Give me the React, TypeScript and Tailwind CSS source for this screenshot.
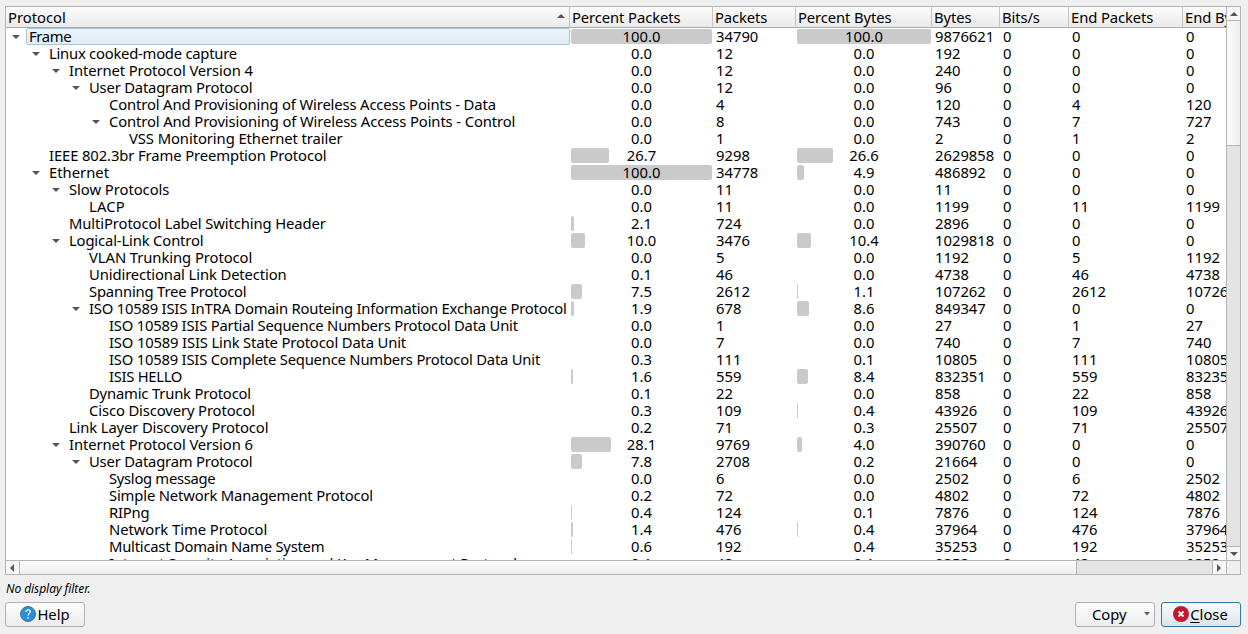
type Row = {
  depth: number;
  name: string;
  open: boolean;
  pp: string;
  packets: string;
  pb: string;
  bytes: string;
  endPackets: string;
  endBytes: string;
  spacing: number;
  ppBar: number;
  pbBar: number;
};

const r = (
  depth: number,
  open: boolean,
  name: string,
  spacing: number,
  pp: string,
  packets: string,
  pb: string,
  bytes: string,
  endPackets: string,
  endBytes: string,
  ppBar = 0,
  pbBar = 0,
): Row => ({ depth, open, name, spacing, pp, packets, pb, bytes, endPackets, endBytes, ppBar, pbBar });

const rows: Row[] = [
  r(0, true, 'Frame', -0.35, '100.0', '34790', '100.0', '9876621', '0', '0', 141, 134),
  r(1, true, 'Linux cooked-mode capture', -0.24, '0.0', '12', '0.0', '192', '0', '0'),
  r(2, true, 'Internet Protocol Version 4', -0.11, '0.0', '12', '0.0', '240', '0', '0'),
  r(3, true, 'User Datagram Protocol', -0.2, '0.0', '12', '0.0', '96', '0', '0'),
  r(4, false, 'Control And Provisioning of Wireless Access Points - Data', -0.14, '0.0', '4', '0.0', '120', '4', '120'),
  r(4, true, 'Control And Provisioning of Wireless Access Points - Control', -0.12, '0.0', '8', '0.0', '743', '7', '727'),
  r(5, false, 'VSS Monitoring Ethernet trailer', -0.08, '0.0', '1', '0.0', '2', '1', '2'),
  r(1, false, 'IEEE 802.3br Frame Preemption Protocol', -0.11, '26.7', '9298', '26.6', '2629858', '0', '0', 38, 36),
  r(1, true, 'Ethernet', 0, '100.0', '34778', '4.9', '486892', '0', '0', 141, 7),
  r(2, true, 'Slow Protocols', -0.05, '0.0', '11', '0.0', '11', '0', '0'),
  r(3, false, 'LACP', 0.2, '0.0', '11', '0.0', '1199', '11', '1199'),
  r(2, false, 'MultiProtocol Label Switching Header', -0.11, '2.1', '724', '0.0', '2896', '0', '0', 3),
  r(2, true, 'Logical-Link Control', -0.15, '10.0', '3476', '10.4', '1029818', '0', '0', 14, 14),
  r(3, false, 'VLAN Trunking Protocol', -0.07, '0.0', '5', '0.0', '1192', '5', '1192'),
  r(3, false, 'Unidirectional Link Detection', -0.11, '0.1', '46', '0.0', '4738', '46', '4738'),
  r(3, false, 'Spanning Tree Protocol', -0.18, '7.5', '2612', '1.1', '107262', '2612', '107262', 11, 1),
  r(3, true, 'ISO 10589 ISIS InTRA Domain Routeing Information Exchange Protocol', -0.21, '1.9', '678', '8.6', '849347', '0', '0', 3, 12),
  r(4, false, 'ISO 10589 ISIS Partial Sequence Numbers Protocol Data Unit', -0.21, '0.0', '1', '0.0', '27', '1', '27'),
  r(4, false, 'ISO 10589 ISIS Link State Protocol Data Unit', -0.16, '0.0', '7', '0.0', '740', '7', '740'),
  r(4, false, 'ISO 10589 ISIS Complete Sequence Numbers Protocol Data Unit', -0.21, '0.3', '111', '0.1', '10805', '111', '10805'),
  r(4, false, 'ISIS HELLO', -0.3, '1.6', '559', '8.4', '832351', '559', '832351', 2, 11),
  r(3, false, 'Dynamic Trunk Protocol', -0.18, '0.1', '22', '0.0', '858', '22', '858'),
  r(3, false, 'Cisco Discovery Protocol', -0.12, '0.3', '109', '0.4', '43926', '109', '43926', 0, 1),
  r(2, false, 'Link Layer Discovery Protocol', -0.13, '0.2', '71', '0.3', '25507', '71', '25507'),
  r(2, true, 'Internet Protocol Version 6', -0.11, '28.1', '9769', '4.0', '390760', '0', '0', 40, 5),
  r(3, true, 'User Datagram Protocol', -0.2, '7.8', '2708', '0.2', '21664', '0', '0', 11),
  r(4, false, 'Syslog message', -0.3, '0.0', '6', '0.0', '2502', '6', '2502'),
  r(4, false, 'Simple Network Management Protocol', -0.16, '0.2', '72', '0.0', '4802', '72', '4802'),
  r(4, false, 'RIPng', -0.2, '0.4', '124', '0.1', '7876', '124', '7876', 1),
  r(4, false, 'Network Time Protocol', -0.05, '1.4', '476', '0.4', '37964', '476', '37964', 2, 1),
  r(4, false, 'Multicast Domain Name System', -0.23, '0.6', '192', '0.4', '35253', '192', '35253', 1),
  r(4, false, 'Internet Security Association and Key Management Protocol', -0.16, '0.1', '42', '0.1', '9252', '42', '9252'),
];

const grid = 'grid grid-cols-[564px_143px_83px_136px_68px_69px_114px_120px]';

function Arrow({ dir }: { dir: 'up' | 'down' | 'left' | 'right' }) {
  const d = {
    up: 'M0 6 L4 2 L8 6 Z',
    down: 'M0 2 L8 2 L4 6 Z',
    left: 'M6 0 L2 4 L6 8 Z',
    right: 'M2 0 L6 4 L2 8 Z',
  }[dir];
  return (
    <svg width="8" height="8" viewBox="0 0 8 8" className="shrink-0">
      <path d={d} fill="#555" />
    </svg>
  );
}

function Meter({ value, bar }: { value: string; bar: number }) {
  return (
    <div className="grid h-[17px] items-center px-px *:[grid-area:1/1]">
      <div className="h-[15px] justify-self-start rounded-[2px] bg-[#cacaca]" style={{ width: bar }} />
      <div className="justify-self-center">{value}</div>
    </div>
  );
}

function Header() {
  const cells = ['Percent Packets', 'Packets', 'Percent Bytes', 'Bytes', 'Bits/s', 'End Packets', 'End Bytes'];
  return (
    <div
      className={`${grid} h-[21px] shrink-0 border-b border-[#a9a9a9] bg-linear-to-b from-[#fcfcfc] to-[#eaeaea] leading-[21px] tracking-[-0.1px]`}
    >
      <div className="flex justify-between border-r border-[#c4c4c4] pr-1 pl-[2px]">
        <span className="tracking-normal">Protocol</span>
        <span className="pt-[5px]">
          <Arrow dir="up" />
        </span>
      </div>
      {cells.map((c) => (
        <div key={c} className="border-r border-[#c4c4c4] pl-[2px]">
          {c}
        </div>
      ))}
    </div>
  );
}

function TreeRow({ row, selected }: { row: Row; selected: boolean }) {
  return (
    <div className={`${grid} h-[17px] shrink-0 leading-[17px]`}>
      <div className="flex" style={{ paddingLeft: row.depth * 20 }}>
        <div className="flex w-5 shrink-0 items-center justify-center">{row.open && <Arrow dir="down" />}</div>
        <div
          className={
            selected
              ? 'flex-1 rounded-[2px] border border-[#a8c6da] bg-linear-to-b from-[#eaf4fb] to-[#e0edf6] pl-[2px] leading-[15px]'
              : 'flex-1 pl-[3px]'
          }
        >
          <span style={{ letterSpacing: row.spacing }}>{row.name}</span>
        </div>
      </div>
      <Meter value={row.pp} bar={row.ppBar} />
      <div className="pl-[3px]">{row.packets}</div>
      <Meter value={row.pb} bar={row.pbBar} />
      <div className="pl-[3px]">{row.bytes}</div>
      <div className="pl-[3px]">0</div>
      <div className="pl-[3px]">{row.endPackets}</div>
      <div className="pl-[3px]">{row.endBytes}</div>
    </div>
  );
}

export default function App() {
  return (
    <div className="flex h-[634px] w-[1248px] flex-col overflow-hidden bg-[#efefef] pt-[6px] pr-[7px] pb-[6px] pl-[5px] font-['Noto_Sans','Open_Sans',sans-serif] text-[14.8px] whitespace-pre text-black">
      <div className="grid h-[569px] shrink-0 grid-cols-[1220px_14px] grid-rows-[553px_14px] border border-[#b4b4b4] bg-white">
        <div className="flex min-w-0 flex-col overflow-hidden">
          <Header />
          {rows.map((row, i) => (
            <TreeRow key={i} row={row} selected={i === 0} />
          ))}
        </div>
        <div className="flex flex-col border-l border-[#b4b4b4] bg-[#e4e4e4]">
          <div className="flex h-[14px] items-center justify-center border-b border-[#b4b4b4] bg-[#f6f6f6]">
            <Arrow dir="up" />
          </div>
          <div className="h-[125px] border-b border-[#b4b4b4] bg-linear-to-r from-[#fcfcfc] to-[#ededed]" />
          <div className="flex-1" />
          <div className="flex h-[14px] items-center justify-center border-t border-[#b4b4b4] bg-[#f6f6f6]">
            <Arrow dir="down" />
          </div>
        </div>
        <div className="flex border-t border-[#b4b4b4] bg-[#e4e4e4]">
          <div className="flex w-[14px] items-center justify-center border-r border-[#b4b4b4] bg-[#f6f6f6] pr-px">
            <Arrow dir="left" />
          </div>
          <div className="w-[1057px] border-r border-[#b4b4b4] bg-linear-to-b from-[#fcfcfc] to-[#ededed]" />
          <div className="flex-1" />
          <div className="flex w-[14px] items-center justify-center border-l border-[#b4b4b4] bg-[#f6f6f6] pr-px">
            <Arrow dir="right" />
          </div>
        </div>
        <div className="border-t border-l border-[#b4b4b4] bg-[#efefef]" />
      </div>

      <div className="mt-[5px] h-[18px] pl-px text-[12px] leading-[18px] tracking-[-0.06px] italic">No display filter.</div>

      <div className="mt-[4px] flex h-[25px] gap-[6px]">
        <button className="flex w-20 items-center justify-center gap-px rounded-[3px] border border-[#b0b0b0] bg-linear-to-b from-[#fdfdfd] to-[#ededed]">
          <svg width="16" height="16" viewBox="0 0 16 16" className="mb-px">
            <circle cx="8" cy="8" r="7.5" fill="#2a8fd8" stroke="#4a6f90" />
            <path d="M5.8 6c0-1.3 1-2.2 2.3-2.2s2.2.8 2.2 2c0 1.600-2.200 1.700-2.200 3.600" fill="none" stroke="#fff" strokeWidth="1.200" />
            <circle cx="8" cy="11.800" r=".9" fill="#fff" />
          </svg>
          <span>Help</span>
        </button>
        <div className="flex-1" />
        <button className="flex w-20 items-center rounded-[3px] border border-[#b0b0b0] bg-linear-to-b from-[#fdfdfd] to-[#ededed] pr-1 pl-4">
          <span className="flex-1 text-left">Copy</span>
          <svg width="6" height="4" viewBox="0 0 6 4" className="mb-px">
            <path d="M0 0H6L3 3.500Z" fill="#5c5c5c" />
          </svg>
        </button>
        <button className="flex w-20 items-center justify-center gap-px rounded-[3px] border border-[#2f7aa8] bg-linear-to-b from-[#f9fbfc] to-[#dbe4ea] pr-px">
          <svg width="16" height="16" viewBox="0 0 16 16" className="mb-px">
            <circle cx="8" cy="8" r="8" fill="#c7162b" />
            <path d="M5.500 5.500L10.500 10.500M10.500 5.500L5.500 10.500" stroke="#fff" strokeWidth="1.800" />
          </svg>
          <span>
            <span className="underline decoration-1 underline-offset-2">C</span>lose
          </span>
        </button>
      </div>
    </div>
  );
}
